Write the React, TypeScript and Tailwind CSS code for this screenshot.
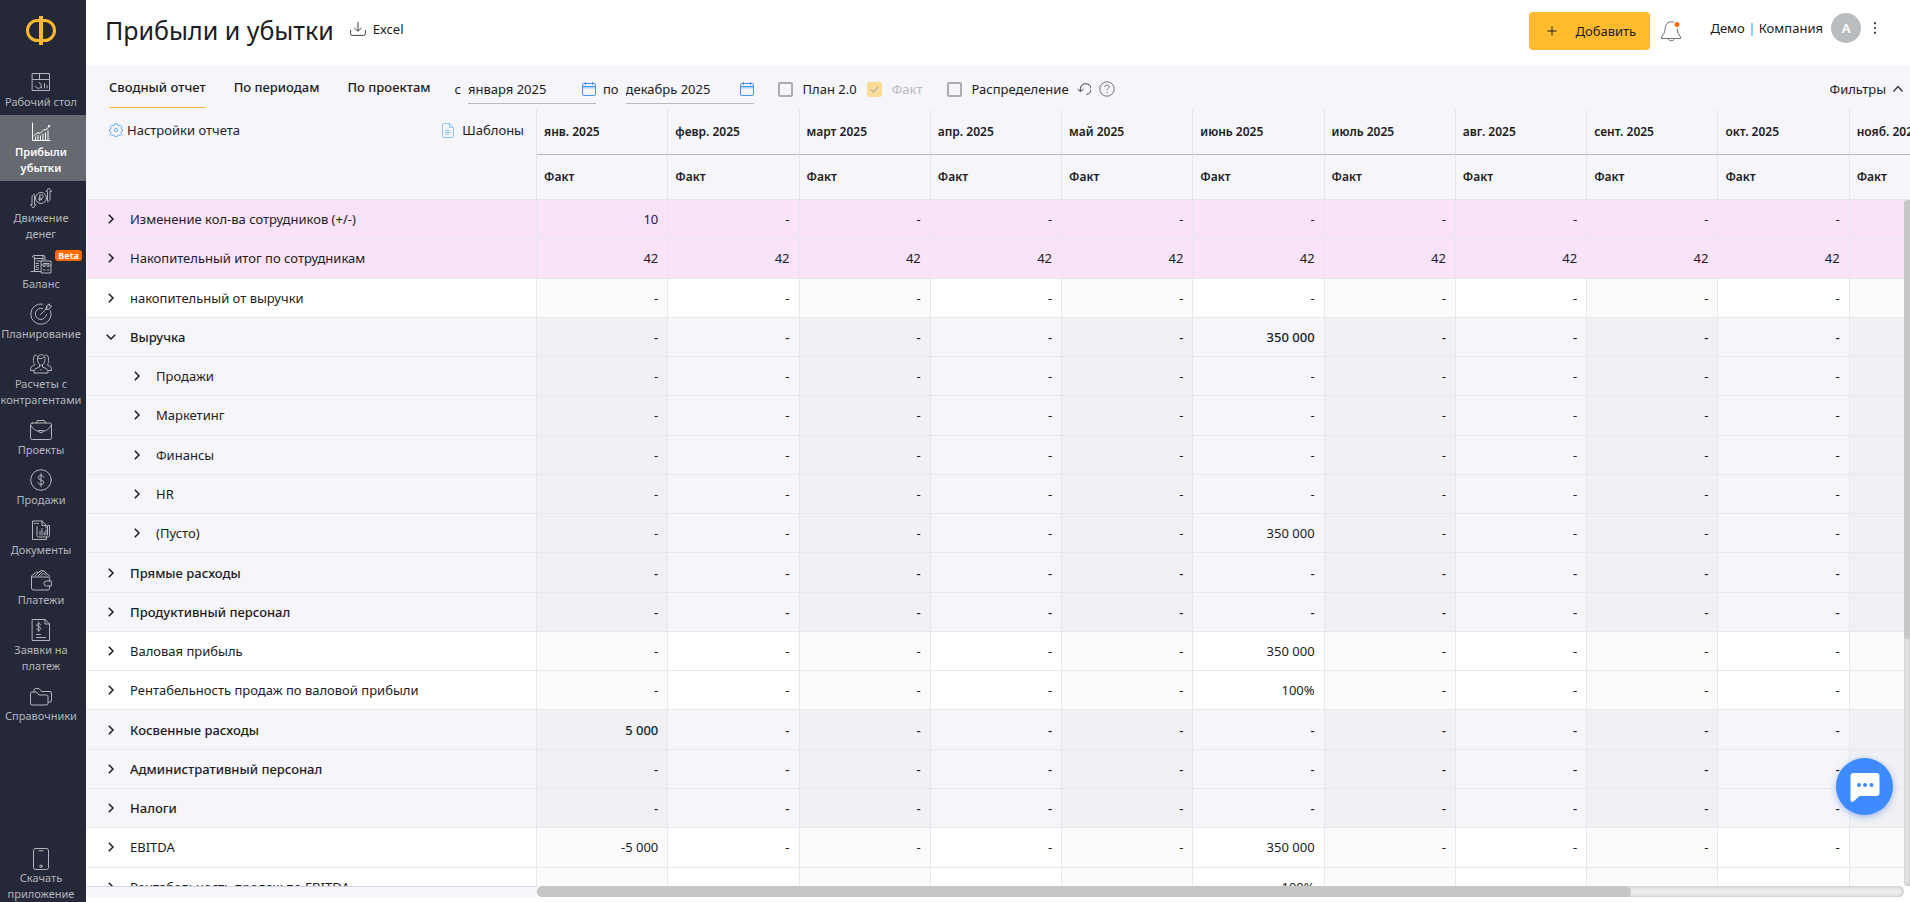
import type { ReactNode } from "react";
import clsx from "clsx";

/* ================= Data ================= */

const months = [
  "янв. 2025",
  "февр. 2025",
  "март 2025",
  "апр. 2025",
  "май 2025",
  "июнь 2025",
  "июль 2025",
  "авг. 2025",
  "сент. 2025",
  "окт. 2025",
  "нояб. 2025",
];

type Tone = "pink" | "white" | "grey";

type Row = {
  name: string;
  tone: Tone;
  bold?: boolean;
  nested?: boolean;
  open?: boolean;
  fill?: string;
  values?: Record<number, string>;
};

const rows: Row[] = [
  { name: "Изменение кол-ва сотрудников (+/-)", tone: "pink", values: { 0: "10" } },
  { name: "Накопительный итог по сотрудникам", tone: "pink", fill: "42" },
  { name: "накопительный от выручки", tone: "white" },
  { name: "Выручка", tone: "grey", bold: true, open: true, values: { 5: "350 000" } },
  { name: "Продажи", tone: "grey", nested: true },
  { name: "Маркетинг", tone: "grey", nested: true },
  { name: "Финансы", tone: "grey", nested: true },
  { name: "HR", tone: "grey", nested: true },
  { name: "(Пусто)", tone: "grey", nested: true, values: { 5: "350 000" } },
  { name: "Прямые расходы", tone: "grey", bold: true },
  { name: "Продуктивный персонал", tone: "grey", bold: true },
  { name: "Валовая прибыль", tone: "white", values: { 5: "350 000" } },
  { name: "Рентабельность продаж по валовой прибыли", tone: "white", values: { 5: "100%" } },
  { name: "Косвенные расходы", tone: "grey", bold: true, values: { 0: "5 000" } },
  { name: "Административный персонал", tone: "grey", bold: true },
  { name: "Налоги", tone: "grey", bold: true },
  { name: "EBITDA", tone: "white", values: { 0: "-5 000", 5: "350 000" } },
  { name: "Рентабельность продаж по EBITDA", tone: "white", values: { 5: "100%" } },
];

const nameTone: Record<Tone, string> = {
  pink: "bg-[#f9e3f8]",
  white: "bg-white",
  grey: "bg-[#f5f5fa]",
};

const oddTone: Record<Tone, string> = {
  pink: "bg-[#f9e3f8]",
  white: "bg-[#fbfbfb]",
  grey: "bg-[#f0f0f5]",
};

/* ================= Icons ================= */

function Icon({ children, className = "size-[22px]" }: { children: ReactNode; className?: string }) {
  return (
    <svg
      viewBox="0 0 22 22"
      fill="none"
      stroke="currentColor"
      strokeLinecap="round"
      strokeLinejoin="round"
      className={className}
      aria-hidden="true"
    >
      {children}
    </svg>
  );
}

const DashboardIcon = () => (
  <Icon>
    <path d="M2.500 2.500h17v17h-17zM2.500 8.500h17M9.500 2.500v6" />
    <path d="M9 11.500a3 3 0 1 1-3.600 3.800M14.500 17v-4.500M17 17v-2.500M11.500 17v-1" />
  </Icon>
);

const ProfitIcon = () => (
  <Icon>
    <path d="M2.500 2v17.500h17.500" />
    <path d="M4 14.500l4-3 2 1 4-4 2 .5 3.500-4" />
    <path d="M5.500 19v-3M8 19v-4.500M10.500 19v-4M13 19v-6M15.500 19v-7M18 19v-9" />
    <circle cx="19" cy="5" r="0.600" />
  </Icon>
);

const MoneyFlowIcon = () => (
  <Icon>
    <circle cx="11" cy="11" r="5.500" />
    <path d="M9.700 14v-6h2a1.500 1.500 0 0 1 0 3.200H8.800M8.800 12.600h3" />
    <path d="M17.500 13.500V4.500H16L18.700 1l2.800 3.500H20v7c0 1.800-.8 2.800-2.500 3.500" />
    <path d="M4.500 8.500v9H6L3.300 21 .5 17.500H2v-7C2 8.700 2.800 7.700 4.500 7" />
  </Icon>
);

const BalanceIcon = () => (
  <Icon>
    <path d="M2.500 4a1.500 1.500 0 0 1 1.500-1.500h9.500a1.500 1.500 0 0 1 1.500 1.500v3M4.500 4v14.500M13 2.500V7M1 18.500h9.500" />
    <path d="M4 5.500h9M7 8h4M6 10.500h2.500M8.500 12.500H7a1 1 0 0 0 0 2h.5a1 1 0 0 1 0 2H6" />
    <path d="M11.500 8h9.500v12h-9.500zM13.500 10.500h5.500M13.500 13.500h1.500M17.500 13.500H19M13.500 17h1.500M17.500 17H19M11.500 12H21" />
  </Icon>
);

const PlanIcon = () => (
  <Icon>
    <path d="M12.500 1a10.200 10.200 0 1 0 8.200 7" />
    <path d="M12.500 5.500a5.600 5.600 0 1 0 4 6" />
    <path d="M10.500 11.500l6-6M16 6l.5-3L19.500.8l.2 2 1.800.2-2.300 3zM18 3.500l-2 2.500" />
  </Icon>
);

const PeopleIcon = () => (
  <Icon>
    <path d="M8 3.500c1.500-2.500 5-2.500 6.500 0 1.200 2.500.3 6-1.500 8-1 1-2.500 1-3.500 0-2-2-2.700-5.500-1.500-8z" />
    <path d="M8.500 5.500c2 .5 4 0 5-1.200M9.500 12v2L6 15.500c-1.500.7-2 2-2 4.500h14c0-2.500-.5-3.800-2-4.500L12.500 14v-2M11 16.500v.5" />
    <path d="M6.500 2C4 1.500 3.500 4 3.500 6c0 2-.5 3 .5 4.500 1 .8 1 1.500 0 2C1.500 13 .5 14 .5 17.500h3M15.500 2C18 1.500 18.500 4 18.500 6c0 2 .5 3-.5 4.500-1 .8-1 1.500 0 2 2.500.5 3.500 1.500 3.500 5h-3" />
  </Icon>
);

const BriefcaseIcon = () => (
  <Icon>
    <rect x="0.500" y="4" width="21" height="16.500" rx="1.800" />
    <path d="M6.500 4l.8-2.500h7.400l.8 2.500M1 6.500c2 4 5 5.500 8 5.800M21 6.500c-2 4-5 5.500-8 5.800" />
    <path d="M9 11.500h4v1.300c-1 1.200-3 1.200-4 0z" />
  </Icon>
);

const DollarIcon = () => (
  <Icon>
    <circle cx="11" cy="11" r="10.300" />
    <path d="M13.800 8.200c-.4-1.200-1.500-1.700-2.800-1.700-1.500 0-2.800.8-2.800 2.200 0 3 5.600 1.600 5.600 4.600 0 1.400-1.300 2.200-2.800 2.200-1.400 0-2.500-.6-2.900-1.800M11 4.500v13" />
  </Icon>
);

const DocsIcon = () => (
  <Icon>
    <path d="M16.500 18v2.500h-14v-18.500h9.500l4 4v3" />
    <path d="M12 2v4.500h4M4.500 4.500h1M7 4.500h1.500" />
    <path d="M7 7.500v9c0 1 .5 1.500 1.500 1.500h9c1.500 0 2-.5 2-1.500V6.500h-2v9.500M10 16v-4M12 16V9.500M14.200 16v-3M16 16v-5" />
  </Icon>
);

const WalletIcon = () => (
  <Icon>
    <path d="M19.500 12V9.500a1.500 1.500 0 0 0-1.500-1.500H2.500a1 1 0 0 1-1-1v12a2 2 0 0 0 2 2h14.500a1.500 1.500 0 0 0 1.500-1.500V17" />
    <path d="M21 12h-4.500a2.500 2.500 0 0 0 0 5H21z" />
    <path d="M1.500 7L6.500 3l2 .500 3-2 2.500.500 6 5.500M5 7l5-5M8 7l4.500-4.500M11 6.500c1-2 3-2.500 5.500-.500" />
  </Icon>
);

const InvoiceIcon = () => (
  <Icon>
    <path d="M2.500.5h12.500l4.500 4.500v16.500h-17zM15 .5v4.500h4.500" />
    <path d="M10.500 5.500c-.4-.8-1-1-1.800-1-1 0-1.900.5-1.900 1.600 0 2.200 3.900 1.200 3.900 3.400 0 1.100-1 1.700-2 1.700-.9 0-1.700-.4-2-1.300M8.700 3v9.500M6.500 15.500h4M6.500 18.500h9" />
  </Icon>
);

const FoldersIcon = () => (
  <Icon>
    <path d="M.5 8.500A1.500 1.500 0 0 1 2 7h4.500L9 10h7.500A1.500 1.500 0 0 1 18 11.500v7a1.500 1.500 0 0 1-1.500 1.500H2A1.500 1.500 0 0 1 .5 18.500z" />
    <path d="M4 7V5a1.500 1.500 0 0 1 1.500-1.500H9L11.500 6.500H20a1.500 1.500 0 0 1 1.500 1.500v7.500a1.500 1.500 0 0 1-1.500 1.500h-2" />
  </Icon>
);

const PhoneIcon = () => (
  <Icon>
    <rect x="3.500" y="0.500" width="15" height="21" rx="2" />
    <path d="M9 2.800h4" />
    <circle cx="11" cy="18.200" r="1.200" />
  </Icon>
);

function CalendarIcon() {
  return (
    <svg viewBox="0 0 14 14" className="size-3.5 shrink-0" fill="none" stroke="#4a90ef" aria-hidden="true">
      <path d="M1 4.500h12v2H1z" fill="#a9d0fb" stroke="none" />
      <rect x="0.500" y="1.500" width="13" height="12" rx="1.500" />
      <path d="M.5 4.500h13M3.500 0v3M10.500 0v3" />
    </svg>
  );
}

function Chevron({ open }: { open?: boolean }) {
  return (
    <svg
      viewBox="0 0 10 10"
      className="size-2.5 shrink-0"
      fill="none"
      stroke="#1c1c22"
      strokeWidth="1.500"
      aria-hidden="true"
    >
      {open ? <path d="M.7 2.800L5 7l4.300-4.200" /> : <path d="M2.800.7L7 5 2.800 9.300" />}
    </svg>
  );
}

/* ================= Sidebar ================= */

const menu = [
  { label: "Рабочий стол", icon: DashboardIcon },
  { label: "Прибыли убытки", icon: ProfitIcon, active: true },
  { label: "Движение денег", icon: MoneyFlowIcon },
  { label: "Баланс", icon: BalanceIcon, beta: true },
  { label: "Планирование", icon: PlanIcon },
  { label: "Расчеты с контрагентами", icon: PeopleIcon },
  { label: "Проекты", icon: BriefcaseIcon },
  { label: "Продажи", icon: DollarIcon },
  { label: "Документы", icon: DocsIcon },
  { label: "Платежи", icon: WalletIcon },
  { label: "Заявки на платеж", icon: InvoiceIcon },
  { label: "Справочники", icon: FoldersIcon },
];

function Sidebar() {
  return (
    <aside className="w-[86px] shrink-0 flex flex-col overflow-hidden bg-[#242838] text-[#b4b6bc]">
      <a href="#" aria-label="На главную" className="h-[65px] shrink-0 flex justify-center pt-4 pr-1">
        <svg viewBox="0 0 30 29" className="w-[30px] h-[29px]" fill="none" stroke="#fdb92e" aria-hidden="true">
          <path d="M15 0v29" strokeWidth="4" />
          <rect x="1.500" y="4.500" width="27" height="20" rx="10" strokeWidth="3" />
        </svg>
      </a>
      <nav className="flex-1 min-h-0">
        {menu.map(({ label, icon: ItemIcon, active, beta }) => (
          <a
            key={label}
            href="#"
            className={clsx(
              "relative flex flex-col items-center pt-1.5 pb-[5px] pr-1",
              active && "bg-[#666970] text-white font-semibold"
            )}
          >
            <ItemIcon />
            <span className="mt-px w-20 flex justify-center text-center text-[11px] leading-4">{label}</span>
            {beta && (
              <span className="absolute right-1 top-[3px] rounded-[3px] bg-[#ff6a00] px-[3px] text-[9px] leading-[11px] font-bold text-white">
                Beta
              </span>
            )}
          </a>
        ))}
      </nav>
      <a href="#" className="h-[54px] shrink-0 flex flex-col items-center pr-1">
        <PhoneIcon />
        <span className="w-20 text-center text-[11px] leading-4">Скачать приложение</span>
      </a>
    </aside>
  );
}

/* ================= Header ================= */

function Header() {
  return (
    <header className="h-[65px] shrink-0 flex items-start justify-between bg-white pl-[18px] pr-[33px]">
      <div className="flex items-start gap-4 pt-3.5">
        <h1 className="text-[25px] leading-8">Прибыли и убытки</h1>
        <button className="flex items-center gap-[7px] pt-[5px]">
          <svg viewBox="0 0 16 14" className="w-4 h-3.5" fill="none" stroke="#3c3f4a" aria-hidden="true">
            <path d="M8 0v9M4.500 6L8 9.300 11.500 6M.6 8v3.500A1.800 1.800 0 0 0 2.400 13.400h11.200a1.800 1.800 0 0 0 1.800-1.900V8" />
          </svg>
          Excel
        </button>
      </div>
      <div className="flex items-start pt-3">
        <button className="h-[38px] w-[121px] flex items-center gap-[18px] rounded bg-[#fdbb2d] pl-[18px]">
          <svg viewBox="0 0 10 10" className="size-2.5" stroke="#1c1c22" aria-hidden="true">
            <path d="M5 .5v9M.5 5h9" />
          </svg>
          Добавить
        </button>
        <button aria-label="Уведомления" className="ml-2.5 pt-2">
          <svg viewBox="0 0 22 22" className="size-[22px]" fill="none" stroke="#6f727a" aria-hidden="true">
            <path d="M14 2.500C12 1 6.500 1.500 5.500 6.500L4.500 12.500 1.500 17v1.500h19V17l-2.500-4-.8-4.500M8 18.500c.5 3 6 3 6.500 0" />
            <circle cx="17" cy="4.500" r="2.500" fill="#ff6a00" stroke="none" />
          </svg>
        </button>
        <div className="ml-7 flex items-center gap-2 pt-px">
          <span>
            Демо <span className="text-[#3d8bfd]">|</span> Компания
          </span>
          <span className="size-[30px] rounded-full bg-[#babdc0] text-white font-semibold flex items-center justify-center">
            A
          </span>
        </div>
        <button aria-label="Меню" className="ml-3 pt-2.5">
          <svg viewBox="0 0 4 12" className="w-1 h-3" fill="#33363f" aria-hidden="true">
            <circle cx="2" cy="1.200" r="1.100" />
            <circle cx="2" cy="6" r="1.100" />
            <circle cx="2" cy="10.800" r="1.100" />
          </svg>
        </button>
      </div>
    </header>
  );
}

/* ================= Toolbar ================= */

function DateField({ label, value }: { label: string; value: string }) {
  return (
    <label className="flex items-center gap-[7px]">
      {label}
      <span className="w-32 h-[30px] flex items-center border-b border-[#b8b9be]">
        <input defaultValue={value} className="min-w-0 flex-1 bg-transparent outline-none" />
        <CalendarIcon />
      </span>
    </label>
  );
}

function Check({ label, checked }: { label: string; checked?: boolean }) {
  return (
    <label className={clsx("flex items-center gap-2.5", checked && "text-[#b9bac0]")}>
      <span className="relative flex">
        <input
          type="checkbox"
          defaultChecked={checked}
          disabled={checked}
          className="appearance-none size-[15px] rounded-xs border-2 border-[#adacb3] checked:border-[#fcdb97] checked:bg-[#fcdb97]"
        />
        {checked && (
          <svg
            viewBox="0 0 15 15"
            className="absolute inset-0 size-[15px]"
            fill="none"
            stroke="#b9b6ae"
            strokeWidth="1.500"
            aria-hidden="true"
          >
            <path d="M4 7.500L6.500 10 11 5" />
          </svg>
        )}
      </span>
      {label}
    </label>
  );
}

function Toolbar() {
  return (
    <div className="h-11 shrink-0 flex items-center pl-[22px] pr-[7px]">
      <nav className="h-full flex gap-7 font-medium">
        <a href="#" className="h-[43px] border-b border-[#fdb92e] pt-3">
          Сводный отчет
        </a>
        <a href="#" className="pt-3">
          По периодам
        </a>
        <a href="#" className="pt-3">
          По проектам
        </a>
      </nav>
      <div className="ml-6 flex items-center gap-[7px] pt-1">
        <DateField label="с" value="января 2025" />
        <DateField label="по" value="декабрь 2025" />
      </div>
      <div className="ml-6 flex items-center gap-2.5 pt-1">
        <Check label="План 2.0" />
        <Check label="Факт" checked />
      </div>
      <div className="ml-6 flex items-center gap-2 pt-1">
        <Check label="Распределение" />
        <button aria-label="Сбросить">
          <svg viewBox="0 0 14 14" className="size-3.5" fill="none" stroke="#33363f" aria-hidden="true">
            <path d="M.7 7.200l2.600 2.300 3.200-2.300M3.400 9C2.800 5 5 1.800 8.300 1.800a5.200 5.200 0 0 1 1.200 10.600" />
          </svg>
        </button>
        <button aria-label="Справка">
          <svg viewBox="0 0 16 16" className="size-4" fill="none" stroke="#6f727a" aria-hidden="true">
            <circle cx="8" cy="8" r="7.200" />
            <path d="M5.800 6.200c.1-3 4.600-2.800 4.400 0C10 7.800 8 7.800 8 9.500M8 11v1.200" />
          </svg>
        </button>
      </div>
      <button className="ml-auto flex items-center gap-[7px] pt-1">
        Фильтры
        <svg viewBox="0 0 10 10" className="size-2.5" fill="none" stroke="#33363f" strokeWidth="1.300" aria-hidden="true">
          <path d="M.5 7.500L5 2.500l4.500 5" />
        </svg>
      </button>
    </div>
  );
}

/* ================= Report ================= */

function ReportTable() {
  return (
    <table className="w-[1894px] h-[798px] table-fixed border-separate border-spacing-0">
      <colgroup>
        <col className="w-[450px]" />
        {months.map((m) => (
          <col key={m} />
        ))}
      </colgroup>
      <thead>
        <tr className="h-[46px]">
          <th rowSpan={2} className="border-r border-b border-[#e6e6ea] align-top font-normal">
            <div className="flex justify-between pl-[22px] pr-3 pt-[11px]">
              <button className="flex items-center gap-1">
                <svg viewBox="0 0 16 16" className="size-3.5" fill="none" stroke="#5ba4f5" aria-hidden="true">
                  <path d="M6.600.8h2.800l.5 1.900 1.300.5L12.900 2.200l1.900 1.900-1 1.700.5 1.300 1.200.3v1.900l-1.400.4-.5 1.300 1 1.700-1.900 1.900-1.700-1-1.200.5-.4 1.400H6.600l-.5-1.500-1.200-.5-1.700 1-1.900-1.900 1-1.700-.5-1.200-1.300-.4V7.200l1.400-.4.5-1.200-1-1.600 1.900-1.900 1.700 1 1.200-.5z" />
                  <circle cx="8" cy="8" r="2" />
                </svg>
                Настройки отчета
              </button>
              <button className="flex items-center gap-2">
                <svg viewBox="0 0 12 15" className="w-3 h-[15px]" fill="none" stroke="#8fc4f8" aria-hidden="true">
                  <path d="M7.500.5H2A1.500 1.500 0 0 0 .5 2v11A1.500 1.500 0 0 0 2 14.500h8a1.500 1.500 0 0 0 1.500-1.500V4.500zM7.500.5v4h4" />
                  <path d="M3 7.500h4.500M3 9.500h6M3 11.500h4" />
                </svg>
                Шаблоны
              </button>
            </div>
          </th>
          {months.map((m) => (
            <th
              key={m}
              className="border-r border-b border-r-[#e6e6ea] border-b-[#b4bac2] pl-[7px] text-left text-[12px] font-semibold whitespace-nowrap"
            >
              {m}
            </th>
          ))}
        </tr>
        <tr className="h-[45px]">
          {months.map((m) => (
            <th key={m} className="border-r border-b border-[#e6e6ea] pl-[7px] text-left text-[12px] font-semibold">
              Факт
            </th>
          ))}
        </tr>
      </thead>
      <tbody>
        {rows.map((row) => (
          <tr key={row.name} className={row.bold ? "font-medium" : "font-normal"}>
            <td className={clsx("border-r border-b border-[#e8e8ec]", nameTone[row.tone])}>
              <button className={clsx("flex items-center gap-3.5", row.nested ? "pl-[45px]" : "pl-[19px]")}>
                <Chevron open={row.open} />
                {row.name}
              </button>
            </td>
            {months.map((m, i) => (
              <td
                key={m}
                className={clsx(
                  "border-r border-b border-[#e8e8ec] pr-[9px] text-right",
                  i % 2 === 0 ? oddTone[row.tone] : nameTone[row.tone]
                )}
              >
                {row.values?.[i] ?? row.fill ?? "-"}
              </td>
            ))}
          </tr>
        ))}
      </tbody>
    </table>
  );
}

function Report() {
  return (
    <div className="flex-1 min-h-0 flex flex-col">
      <div className="relative flex-1 min-h-0 overflow-hidden">
        <ReportTable />
        {/* vertical scrollbar */}
        <div className="absolute right-0 top-[91px] bottom-0 w-1.5 rounded-l bg-[#ededf0] shadow-[inset_0_0_4px_#b5b5b5]">
          <div className="h-[64%] rounded-l bg-[#c6c6c6]" />
        </div>
      </div>
      {/* horizontal scrollbar */}
      <div className="h-4 flex bg-white pb-[5px]">
        <div className="w-[450px] border-t border-[#ccd4e0] bg-[#f5f5fa]" />
        <div className="flex-1 mr-1.5 rounded-full bg-[#ededf0] shadow-[inset_0_0_4px_#b5b5b5]">
          <div className="h-full w-4/5 rounded-full bg-[#c6c6c6]" />
        </div>
      </div>
    </div>
  );
}

export default function App() {
  return (
    <div className="h-screen flex overflow-hidden bg-[#f5f5fa] font-['Noto_Sans',sans-serif] text-[13px] leading-5 text-[#1c1c22]">
      <Sidebar />
      <main className="flex-1 min-w-0 flex flex-col border-l border-[#f5f5fa]">
        <Header />
        <Toolbar />
        <Report />
      </main>
      <button
        aria-label="Открыть чат"
        className="fixed right-[17px] bottom-[87px] size-[57px] rounded-full bg-[#3d8bff] shadow-[0_2px_6px_rgba(60,120,220,0.45)] flex items-center justify-center"
      >
        <svg viewBox="0 0 30 30" className="size-[30px]" aria-hidden="true">
          <path d="M3.500 1h23A3 3 0 0 1 29.500 4v17a3 3 0 0 1-3 3H9.500l-6 5.500C2 30.500.5 30 .5 28V4a3 3 0 0 1 3-3z" fill="#fff" />
          <circle cx="9" cy="13" r="2" fill="#3d8bff" />
          <circle cx="15" cy="13" r="2" fill="#3d8bff" />
          <circle cx="21.500" cy="13" r="2" fill="#3d8bff" />
        </svg>
      </button>
    </div>
  );
}
